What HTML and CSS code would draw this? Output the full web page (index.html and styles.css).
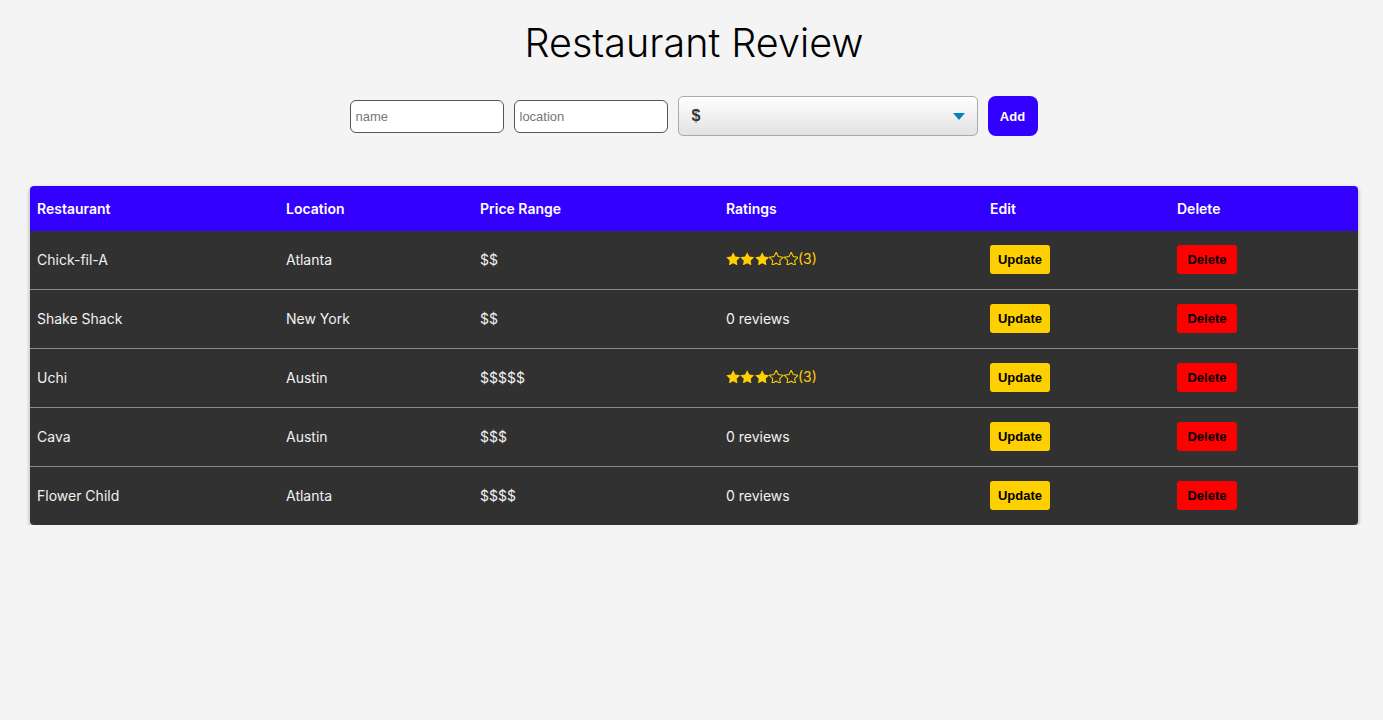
FILE: index.html
```html
<!DOCTYPE html>
<html>
<head>
<meta charset="utf-8">
<link rel="stylesheet" href="styles.css">
</head>
<body>
<h1 class="title">Restaurant Review</h1>
<form class="add-form">
  <input class="field" type="text" placeholder="name">
  <input class="field" type="text" placeholder="location">
  <div class="select">
    <span class="select-value">$</span>
    <span class="select-arrow"></span>
  </div>
  <button class="add-btn" type="button">Add</button>
</form>
<div class="table-wrap">
<table class="table">
  <colgroup>
    <col style="width:249px"><col style="width:194px"><col style="width:246px"><col style="width:264px"><col style="width:187px"><col>
  </colgroup>
  <thead>
    <tr><th>Restaurant</th><th>Location</th><th>Price Range</th><th>Ratings</th><th>Edit</th><th>Delete</th></tr>
  </thead>
  <tbody>
    <tr><td>Chick-fil-A</td><td>Atlanta</td><td>$$</td><td><span class="rating"><svg class="star full" viewBox="1.6 1.6 20.8 19.8"><path d="M12 2l3.09 6.26L22 9.27l-5 4.87 1.18 6.88L12 17.77l-6.18 3.25L7 14.14 2 9.27l6.91-1.01z"/></svg><svg class="star full" viewBox="1.6 1.6 20.8 19.8"><path d="M12 2l3.09 6.26L22 9.27l-5 4.87 1.18 6.88L12 17.77l-6.18 3.25L7 14.14 2 9.27l6.91-1.01z"/></svg><svg class="star full" viewBox="1.6 1.6 20.8 19.8"><path d="M12 2l3.09 6.26L22 9.27l-5 4.87 1.18 6.88L12 17.77l-6.18 3.25L7 14.14 2 9.27l6.91-1.01z"/></svg><svg class="star empty" viewBox="1.6 1.6 20.8 19.8"><path d="M12 2l3.09 6.26L22 9.27l-5 4.87 1.18 6.88L12 17.77l-6.18 3.25L7 14.14 2 9.27l6.91-1.01z"/></svg><svg class="star empty" viewBox="1.6 1.6 20.8 19.8"><path d="M12 2l3.09 6.26L22 9.27l-5 4.87 1.18 6.88L12 17.77l-6.18 3.25L7 14.14 2 9.27l6.91-1.01z"/></svg><span class="count">(3)</span></span></td><td><button class="btn upd">Update</button></td><td><button class="btn del">Delete</button></td></tr>
    <tr><td>Shake Shack</td><td>New York</td><td>$$</td><td>0 reviews</td><td><button class="btn upd">Update</button></td><td><button class="btn del">Delete</button></td></tr>
    <tr><td>Uchi</td><td>Austin</td><td>$$$$$</td><td><span class="rating"><svg class="star full" viewBox="1.6 1.6 20.8 19.8"><path d="M12 2l3.09 6.26L22 9.27l-5 4.87 1.18 6.88L12 17.77l-6.18 3.25L7 14.14 2 9.27l6.91-1.01z"/></svg><svg class="star full" viewBox="1.6 1.6 20.8 19.8"><path d="M12 2l3.09 6.26L22 9.27l-5 4.87 1.18 6.88L12 17.77l-6.18 3.25L7 14.14 2 9.27l6.91-1.01z"/></svg><svg class="star full" viewBox="1.6 1.6 20.8 19.8"><path d="M12 2l3.09 6.26L22 9.27l-5 4.87 1.18 6.88L12 17.77l-6.18 3.25L7 14.14 2 9.27l6.91-1.01z"/></svg><svg class="star empty" viewBox="1.6 1.6 20.8 19.8"><path d="M12 2l3.09 6.26L22 9.27l-5 4.87 1.18 6.88L12 17.77l-6.18 3.25L7 14.14 2 9.27l6.91-1.01z"/></svg><svg class="star empty" viewBox="1.6 1.6 20.8 19.8"><path d="M12 2l3.09 6.26L22 9.27l-5 4.87 1.18 6.88L12 17.77l-6.18 3.25L7 14.14 2 9.27l6.91-1.01z"/></svg><span class="count">(3)</span></span></td><td><button class="btn upd">Update</button></td><td><button class="btn del">Delete</button></td></tr>
    <tr><td>Cava</td><td>Austin</td><td>$$$</td><td>0 reviews</td><td><button class="btn upd">Update</button></td><td><button class="btn del">Delete</button></td></tr>
    <tr><td>Flower Child</td><td>Atlanta</td><td>$$$$</td><td>0 reviews</td><td><button class="btn upd">Update</button></td><td><button class="btn del">Delete</button></td></tr>
  </tbody>
</table>
</div>
</body>
</html>
```

FILE: styles.css
```css
html, body {
  margin: 0;
  padding: 0;
  background: #f4f4f4;
  font-family: Inter, "Noto Sans", sans-serif;
}
body {
  padding: 0 25px 0 30px;
}
.title {
  margin: 0;
  padding-top: 18px;
  text-align: center;
  font-weight: 300;
  font-size: 39.5px;
  line-height: 50px;
  color: #000;
}
.add-form {
  display: flex;
  justify-content: center;
  align-items: center;
  gap: 10px;
  margin-top: 28px;
  padding-right: 1px;
}
.field {
  box-sizing: border-box;
  width: 154px;
  height: 33px;
  border: 1px solid #555;
  border-radius: 6px;
  background: #fff;
  padding: 0 5px;
  font-family: "Liberation Sans", Arial, sans-serif;
  font-size: 13px;
  outline: none;
}
.field::placeholder {
  color: #777;
}
.select {
  box-sizing: border-box;
  width: 300px;
  height: 40px;
  border: 1px solid #aaa;
  border-radius: 5px;
  background: linear-gradient(#ffffff, #e2e2e2);
  display: flex;
  align-items: center;
  justify-content: space-between;
  padding: 0 12px 0 13px;
}
.select-value {
  font-family: "Liberation Sans", Arial, sans-serif;
  font-weight: bold;
  font-size: 16px;
  color: #333;
}
.select-arrow {
  width: 0;
  height: 0;
  border-left: 6px solid transparent;
  border-right: 6px solid transparent;
  border-top: 7px solid #0a7fc2;
}
.add-btn {
  width: 50px;
  height: 40px;
  border: none;
  border-radius: 8px;
  background: #3300ff;
  color: #fff;
  font-family: "Liberation Sans", Arial, sans-serif;
  font-weight: bold;
  font-size: 13px;
  padding: 0;
}
.table-wrap {
  margin-top: 50px;
  border-radius: 4px;
  overflow: hidden;
  box-shadow: 0 2px 4px rgba(0,0,0,0.35);
}
.table {
  width: 100%;
  border-collapse: collapse;
  table-layout: fixed;
  font-size: 14px;
}
.table th {
  background: #3300ff;
  color: #fff;
  text-align: left;
  font-weight: 600;
  height: 45px;
  padding: 0 7px;
  box-sizing: border-box;
}
.table td {
  background: #313131;
  color: #f2f2f2;
  height: 56px;
  padding: 0 7px 2px;
  border-bottom: 1px solid #8a8a8a;
}
.table tbody tr:last-child td {
  border-bottom: none;
}
.rating {
  display: inline-flex;
  align-items: center;
}
.star {
  width: 14.4px;
  height: 13.7px;
  flex: none;
  margin-top: 1px;
}
.star.full path {
  fill: #ffcf00;
}
.star.empty path {
  fill: none;
  stroke: #ffcf00;
  stroke-width: 1.5;
}
.count {
  color: #ffcf00;
}
.btn {
  width: 60px;
  height: 29px;
  border: none;
  border-radius: 3px;
  font-family: "Liberation Sans", Arial, sans-serif;
  font-weight: bold;
  font-size: 13px;
  color: #000;
  padding: 0;
}
.upd {
  background: #ffd000;
}
.del {
  background: #ff0000;
}
```
